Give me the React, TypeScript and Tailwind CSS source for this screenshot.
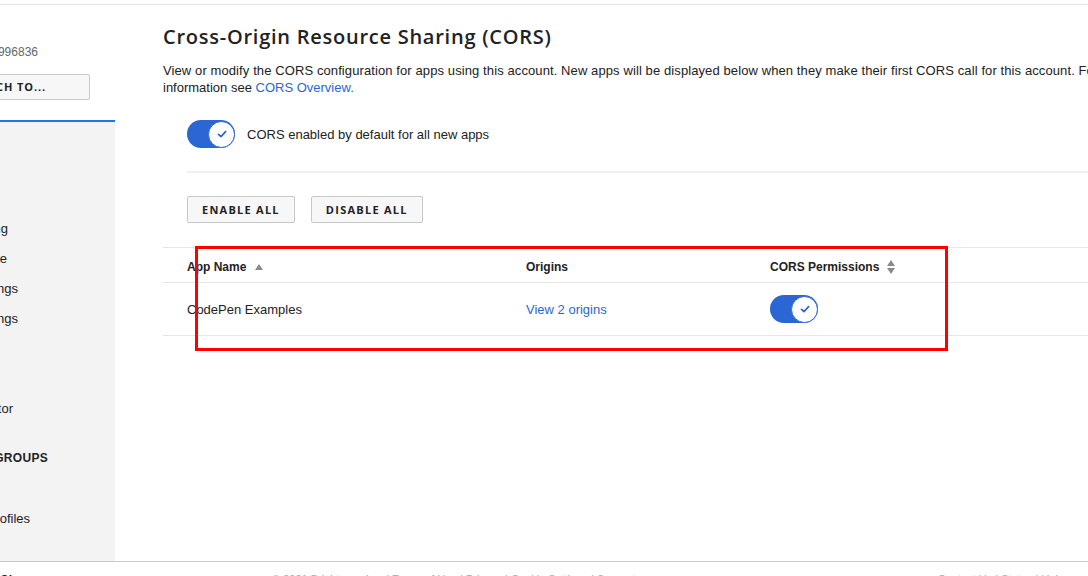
import React from "react";

function Check() {
  return (
    <svg width="12" height="12" viewBox="0 0 12 12" fill="none">
      <path d="M2.5 6.3 L5 8.6 L9.6 3.6" stroke="#2a66d4" strokeWidth="1.7" strokeLinecap="round" strokeLinejoin="round" />
    </svg>
  );
}

function Toggle() {
  return (
    <div className="w-[48px] h-[28px] rounded-full bg-[#2a66d4] flex items-center justify-end shrink-0">
      <div className="w-[27px] h-[27px] rounded-full bg-white border border-[#2a66d4] flex items-center justify-center">
        <Check />
      </div>
    </div>
  );
}

function NavItem({ text, end, bold }: { text: string; end: number; bold?: boolean }) {
  return (
    <div className="h-[30px] flex items-center pt-[1px]">
      <div
        className={
          "flex justify-end whitespace-nowrap " +
          (bold ? "text-[12px] font-bold tracking-[0.3px] text-[#222]" : "text-[13px] text-[#222]")
        }
        style={{ width: end }}
      >
        <span>{text}</span>
      </div>
    </div>
  );
}

export default function App() {
  return (
    <div
      className="w-[1088px] h-[576px] overflow-hidden bg-white flex flex-col text-[#222]"
      style={{ fontFamily: '"Liberation Sans", Arial, sans-serif' }}
    >
      <div className="h-[5px] shrink-0 border-b border-[#e6e6e6]" />
      <div className="flex h-[556px] shrink-0">
        {/* Sidebar */}
        <div className="w-[115px] shrink-0 overflow-hidden flex flex-col">
          <div className="h-[115px] shrink-0 flex flex-col pt-[39px]">
            <div className="h-[16px] flex items-center">
              <div className="flex justify-end whitespace-nowrap text-[12px] text-[#666] w-[38px]">
                <span>Account ID: 6415996836</span>
              </div>
            </div>
            <div className="mt-[14px] flex justify-end w-[90px]">
              <div className="h-[26px] w-[220px] shrink-0 border border-[#c8c8c8] bg-[#f7f7f7] rounded-[2px] flex items-center justify-end pr-[43px]">
                <span
                  className="text-[11px] font-bold tracking-[0.9px] text-[#222] whitespace-nowrap"
                  style={{ fontFamily: '"Open Sans", sans-serif' }}
                >
                  SWITCH TO...
                </span>
              </div>
            </div>
          </div>
          <div className="h-[2px] shrink-0 bg-[#1f74e8]" />
          <div className="flex-1 bg-[#f3f3f3] flex flex-col pt-[91px]">
            <NavItem text="Logging" end={8} />
            <NavItem text="Media Share" end={7} />
            <NavItem text="Video Cloud Live Settings" end={18} />
            <NavItem text="Player Settings" end={18} />
            <div className="h-[30px]" />
            <div className="h-[30px]" />
            <NavItem text="Reference ID Generator" end={13} />
            <div className="mt-[19px]">
              <NavItem text="ACCOUNT GROUPS" end={48} bold />
            </div>
            <div className="mt-[31px]">
              <NavItem text="Ingest Profiles" end={30} />
            </div>
          </div>
        </div>

        {/* Main */}
        <div className="flex-1 min-w-0 relative pl-[48px] pt-[18px] flex flex-col">
          <h1
            className="text-[20px] leading-[28px] font-semibold text-[#222] tracking-[0.75px] whitespace-nowrap"
            style={{ fontFamily: '"Open Sans", sans-serif' }}
          >
            Cross-Origin Resource Sharing (CORS)
          </h1>
          <p className="mt-[11px] text-[13px] leading-[17px] text-[#222] whitespace-nowrap">
            <span className="tracking-[0.1px]">
              View or modify the CORS configuration for apps using this account. New apps will be displayed below when they make their first CORS call for this account. For more
            </span>
            <br />
            information see <span className="text-[#2a66d4]">CORS Overview.</span>
          </p>
          <div className="mt-[24px] ml-6 flex items-center gap-3">
            <Toggle />
            <span className="text-[13px] text-[#222] pt-[1px]">CORS enabled by default for all new apps</span>
          </div>
          <div className="mt-[23px] ml-6 h-[2px] bg-[#f0f0f0]" />
          <div className="mt-[23px] ml-6 flex gap-4">
            {["ENABLE ALL", "DISABLE ALL"].map((t) => (
              <div
                key={t}
                className="h-[27px] px-[14px] border border-[#c8c8c8] bg-[#f7f7f7] rounded-[2px] flex items-center pt-[1px] text-[11px] font-bold tracking-[1.25px] text-[#222]"
                style={{ fontFamily: '"Open Sans", sans-serif' }}
              >
                {t}
              </div>
            ))}
          </div>

          <div className="mt-[24px] border-t border-[#e6e6e6]">
            <div className="grid grid-cols-[339px_244px_1fr] h-[35px] items-center pt-[3px] border-b border-[#e6e6e6] text-[12px] font-bold text-[#222]">
              <div className="pl-6 flex items-center gap-[9px]">
                <span>App Name</span>
                <svg width="8" height="6" viewBox="0 0 8 6">
                  <path d="M4 0 L8 6 L0 6 Z" fill="#8a8a8a" />
                </svg>
              </div>
              <div className="pl-6">Origins</div>
              <div className="pl-6 flex items-center gap-[8px]">
                <span>CORS Permissions</span>
                <svg width="8" height="14" viewBox="0 0 8 14">
                  <path d="M4 0 L8 6 L0 6 Z" fill="#8a8a8a" />
                  <path d="M0 8 L8 8 L4 14 Z" fill="#8a8a8a" />
                </svg>
              </div>
            </div>
            <div className="grid grid-cols-[339px_244px_1fr] h-[53px] items-center border-b border-[#e6e6e6] text-[13px]">
              <div className="pl-6 text-[#222] pt-[1px]">CodePen Examples</div>
              <div className="pl-6 text-[#2a66d4] pt-[1px]">View 2 origins</div>
              <div className="pl-6">
                <Toggle />
              </div>
            </div>
          </div>

          <div className="absolute left-[80px] top-[241px] w-[753px] h-[105px] border-[3px] border-[#ff0000] pointer-events-none" />
        </div>
      </div>

      {/* Footer */}
      <div className="shrink-0 border-t border-[#c9c9c9] h-[40px] relative text-[11px] text-[#aaa]">
        <div className="flex items-start pt-[9px]">
          <span className="pl-0 font-bold text-[#222] text-[12px]">Ci</span>
          <span className="ml-[260px] whitespace-nowrap">© 2021 Brightcove Inc. | Terms of Use | Privacy | Cookie Settings | Support</span>
          <span className="ml-auto pr-[24px] whitespace-nowrap">Contact Us | Status | Help</span>
        </div>
      </div>
    </div>
  );
}
